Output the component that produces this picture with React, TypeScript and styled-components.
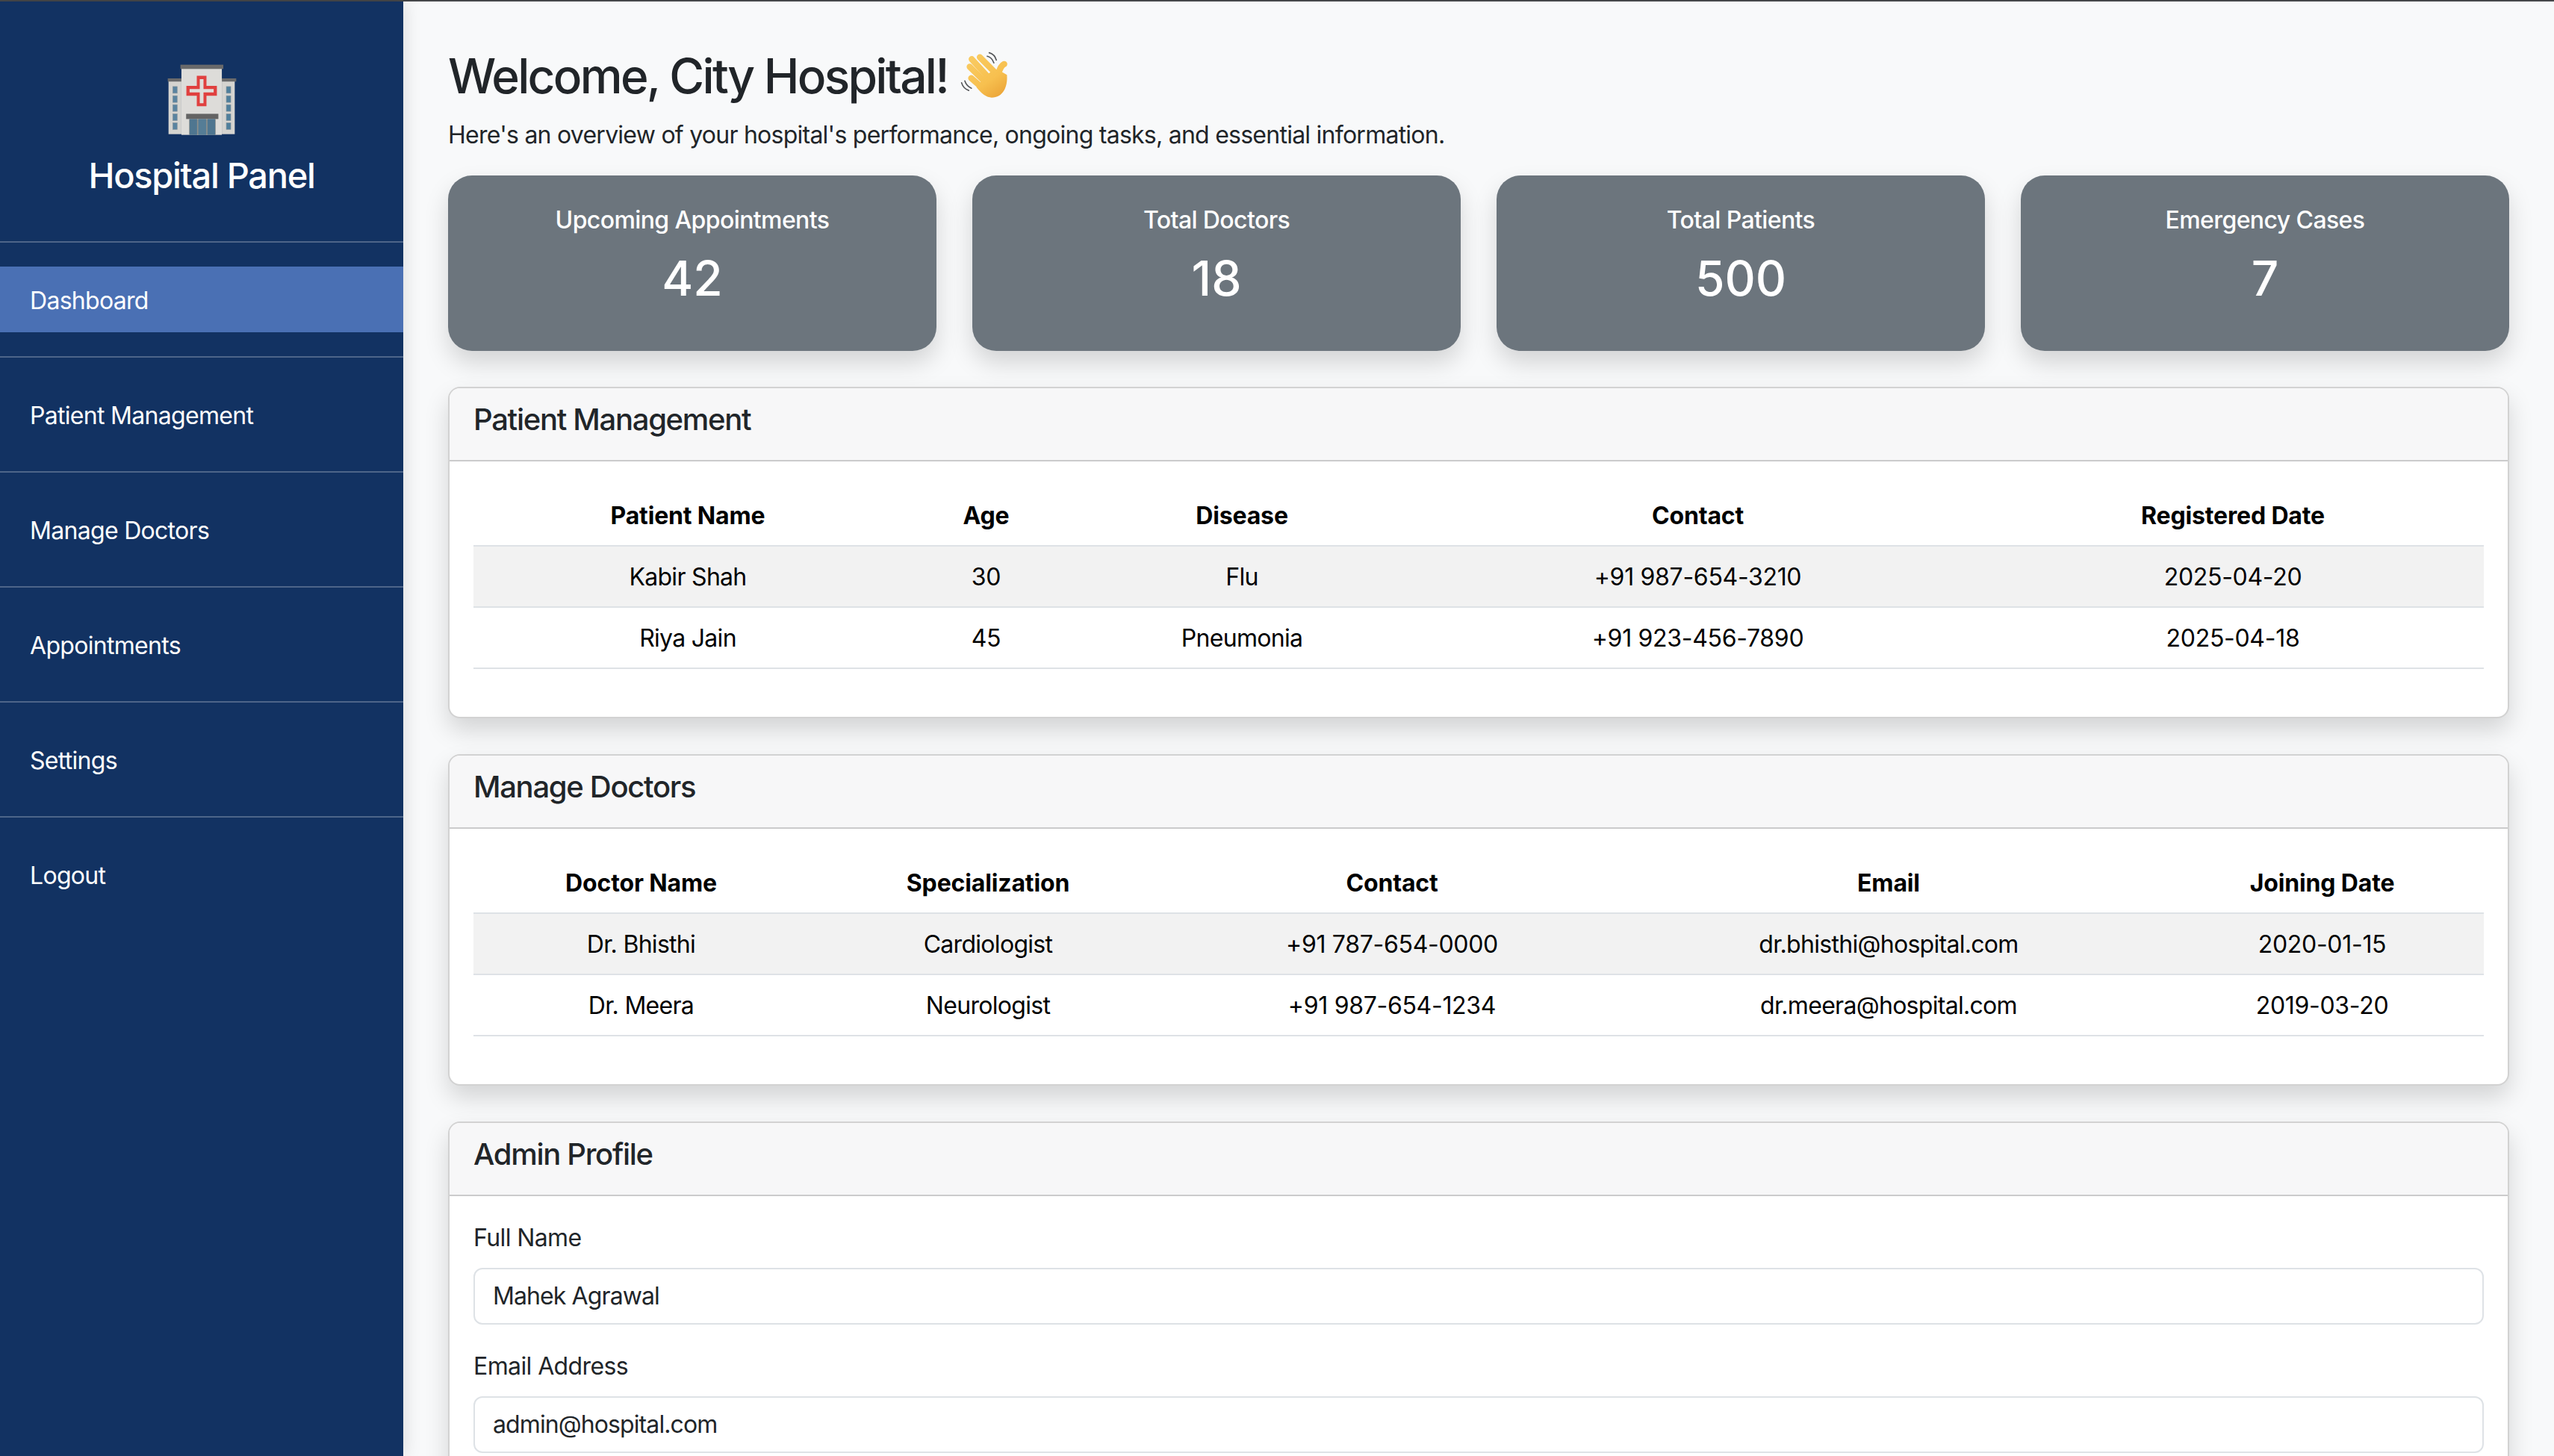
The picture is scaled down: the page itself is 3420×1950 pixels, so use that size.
import * as React from 'react'
import styled, { createGlobalStyle } from 'styled-components'

const GlobalStyle = createGlobalStyle`
  * {
    box-sizing: border-box;
  }

  html, body {
    margin: 0;
    padding: 0;
    background: #f8f9fa;
  }

  body {
    font-family: Inter, "Liberation Sans", sans-serif;
    font-size: 32px;
    line-height: 48px;
    color: #212529;
  }
`

const Page = styled.div`
  height: 100vh;
  display: flex;
  flex-direction: column;
  overflow: hidden;
`

const TopLine = styled.div`
  height: 2px;
  flex-shrink: 0;
  background: #45474a;
`

const Shell = styled.div`
  flex: 1;
  display: flex;
  min-height: 0;
`

const Sidebar = styled.aside`
  width: 540px;
  flex-shrink: 0;
  background: #123262;
  color: #fff;
  box-shadow: 4px 0 20px rgba(0, 0, 0, 0.1);
  position: relative;
`

const Brand = styled.div`
  height: 321px;
  padding-top: 83px;
  display: flex;
  flex-direction: column;
  align-items: center;
`

const BrandTitle = styled.h4`
  margin: 24px 0 0;
  font-size: 47px;
  line-height: 57.6px;
  font-weight: 500;
  letter-spacing: -1.3px;
`

const NavList = styled.ul`
  list-style: none;
  margin: 0;
  padding: 0;
`

const NavItem = styled.li`
  border-top: 2px solid rgba(255, 255, 255, 0.25);
  padding: 32px 0;
`

const NavLink = styled.a<{ $active?: boolean }>`
  display: block;
  height: 88px;
  padding: 22px 40px 18px;
  color: #fff;
  font-size: 32px;
  line-height: 48px;
  letter-spacing: -0.7px;
  background: ${props => (props.$active ? '#4a70b4' : 'transparent')};
`

const Main = styled.main`
  flex: 1;
  min-width: 0;
  padding: 62px 60px 60px;
`

const Heading = styled.h2`
  margin: 0 0 16px;
  font-size: 64px;
  line-height: 76.8px;
  font-weight: 500;
  letter-spacing: -2.7px;
  display: flex;
  align-items: center;
  gap: 16px;
`

const WaveSlot = styled.span`
  display: flex;
  margin-top: -6px;
`

const Intro = styled.p`
  margin: 0 0 30px;
  letter-spacing: -0.75px;
`

const StatRow = styled.div`
  display: grid;
  grid-template-columns: repeat(4, 1fr);
  gap: 48px;
  margin-bottom: 48px;
`

const StatCard = styled.div`
  height: 235px;
  padding-top: 41px;
  background: #6c757d;
  color: #fff;
  border-radius: 32px;
  text-align: center;
  box-shadow: 0 16px 32px rgba(0, 0, 0, 0.15);
`

const StatLabel = styled.h6`
  margin: 0 0 21px;
  font-size: 32px;
  line-height: 38.4px;
  font-weight: 500;
  letter-spacing: -0.6px;
`

const StatValue = styled.div`
  font-size: 64px;
  line-height: 76.8px;
  font-weight: 500;
`

const Panel = styled.section`
  background: #fff;
  border: 2px solid rgba(0, 0, 0, 0.175);
  border-radius: 16px;
  margin-bottom: 48px;
  box-shadow: 0 16px 32px rgba(0, 0, 0, 0.15);
`

const PanelHeader = styled.div`
  height: 98px;
  padding: 18px 32px 0;
  background: #f7f7f8;
  border-bottom: 2px solid rgba(0, 0, 0, 0.175);
  border-radius: 14px 14px 0 0;
`

const PanelTitle = styled.h5`
  margin: 0;
  font-size: 40px;
  line-height: 48px;
  font-weight: 500;
  letter-spacing: -1.3px;
`

const PanelBody = styled.div`
  padding: 32px;
`

const Table = styled.table`
  width: 100%;
  table-layout: fixed;
  border-collapse: collapse;
  margin-bottom: 32px;
  color: #000;
  text-align: center;
`

const Column = styled.col<{ $width: number }>`
  width: ${props => props.$width}px;
`

const HeadCell = styled.th`
  padding: 17px 8px 15px;
  font-weight: 700;
  letter-spacing: -0.15px;
  border-bottom: 2px solid #dee2e6;
`

const Row = styled.tr<{ $striped?: boolean }>`
  background: ${props => (props.$striped ? '#f2f2f2' : 'transparent')};
`

const Cell = styled.td<{ $numeric?: boolean }>`
  padding: 17px 8px 15px;
  letter-spacing: ${props => (props.$numeric ? '-0.3px' : '-0.7px')};
  border-bottom: 2px solid #dee2e6;
`

const Field = styled.div`
  margin-bottom: 32px;
`

const FieldLabel = styled.label`
  display: block;
  margin-bottom: 16px;
  letter-spacing: -0.6px;
`

const Input = styled.input`
  display: block;
  width: 100%;
  height: 76px;
  padding: 12px 24px;
  border: 2px solid #dee2e6;
  border-radius: 12px;
  background: #fff;
  color: #212529;
  font: inherit;
  letter-spacing: -0.9px;
`

const HospitalIcon = () => (
  <svg width="93" height="97" viewBox="130 40 280 292">
    <rect x="135" y="105" width="52" height="220" fill="#d5d4d0" />
    <rect x="350" y="105" width="52" height="220" fill="#d5d4d0" />
    <rect x="132" y="100" width="55" height="13" fill="#69696a" />
    <rect x="350" y="100" width="58" height="13" fill="#69696a" />
    <rect x="187" y="60" width="163" height="268" fill="#dddcd9" />
    <rect x="183" y="45" width="173" height="17" fill="#69696a" />
    {[133, 170, 206, 243, 279].map(y => (
      <React.Fragment key={y}>
        <rect x="152" y={y} width="18" height="27" fill="#5a84a0" stroke="#8a979e" strokeWidth="2" />
        <rect x="368" y={y} width="18" height="27" fill="#4f7f9c" stroke="#8a979e" strokeWidth="2" />
      </React.Fragment>
    ))}
    <path d="M249 90h39v40h42v40h-42v42h-39v-42h-42v-40h42z" fill="#e0403f" />
    <path d="M261 103h15v40h41v14h-41v43h-15v-43h-41v-14h41z" fill="#dfdedb" />
    <rect x="206" y="243" width="130" height="21" fill="#636363" />
    <rect x="218" y="264" width="107" height="64" fill="#8d8f8c" />
    <rect x="220" y="264" width="30" height="64" fill="#4f7690" />
    <rect x="255" y="264" width="32" height="64" fill="#557d96" />
    <rect x="292" y="264" width="31" height="64" fill="#4f7690" />
  </svg>
)

// drawn on the 3x crop grid of the emoji
const WaveIcon = () => (
  <svg width="66" height="65" viewBox="40 50 200 195">
    <defs>
      <linearGradient id="hand" gradientUnits="userSpaceOnUse" x1="90" y1="70" x2="210" y2="240">
        <stop offset="0" stopColor="#f9cb62" />
        <stop offset="0.6" stopColor="#f7c04f" />
        <stop offset="1" stopColor="#eba437" />
      </linearGradient>
    </defs>
    <g fill="none" stroke="#55575a" strokeWidth="5" strokeLinecap="round">
      <path d="M152 74c12 3 22 13 27 27" />
      <path d="M160 60c14 4 25 15 29 30" />
      <path d="M48 182c4 14 15 26 29 31" />
      <path d="M61 174c4 13 14 24 27 30" />
    </g>
    <g fill="none" stroke="url(#hand)" strokeWidth="25" strokeLinecap="round">
      <path d="M122 78L185 142" />
      <path d="M89 86L152 155" />
      <path d="M81 117L140 175" />
      <path d="M87 163L135 205" />
      <path d="M221 106C208 112 204 125 198 142" />
    </g>
    <path
      d="M178 128L198 130L232 150C236 200 216 242 170 242C150 242 128 226 108 200L125 180L145 155Z"
      fill="url(#hand)"
    />
  </svg>
)

const stats = [
  { label: 'Upcoming Appointments', value: '42' },
  { label: 'Total Doctors', value: '18' },
  { label: 'Total Patients', value: '500' },
  { label: 'Emergency Cases', value: '7' }
]

const navLinks = ['Dashboard', 'Patient Management', 'Manage Doctors', 'Appointments', 'Settings', 'Logout']

const patientTable = {
  columns: [574, 225, 460, 761, 672],
  head: ['Patient Name', 'Age', 'Disease', 'Contact', 'Registered Date'],
  rows: [
    ['Kabir Shah', '30', 'Flu', '+91 987-654-3210', '2025-04-20'],
    ['Riya Jain', '45', 'Pneumonia', '+91 923-456-7890', '2025-04-18']
  ]
}

const doctorTable = {
  columns: [449, 480, 602, 728, 433],
  head: ['Doctor Name', 'Specialization', 'Contact', 'Email', 'Joining Date'],
  rows: [
    ['Dr. Bhisthi', 'Cardiologist', '+91 787-654-0000', 'dr.bhisthi@hospital.com', '2020-01-15'],
    ['Dr. Meera', 'Neurologist', '+91 987-654-1234', 'dr.meera@hospital.com', '2019-03-20']
  ]
}

const DataTable = ({ data }: { data: typeof patientTable }) => (
  <Table>
    <colgroup>
      {data.columns.map((width, i) => <Column key={i} $width={width} />)}
    </colgroup>
    <thead>
      <tr>
        {data.head.map(title => <HeadCell key={title}>{title}</HeadCell>)}
      </tr>
    </thead>
    <tbody>
      {data.rows.map((row, i) => (
        <Row key={row[0]} $striped={i === 0}>
          {row.map(text => <Cell key={text} $numeric={/^[+\d]/.test(text)}>{text}</Cell>)}
        </Row>
      ))}
    </tbody>
  </Table>
)

export default function App() {
  return (
    <Page>
      <GlobalStyle />
      <TopLine />
      <Shell>
        <Sidebar>
          <Brand>
            <HospitalIcon />
            <BrandTitle>Hospital Panel</BrandTitle>
          </Brand>
          <NavList>
            {navLinks.map((link, i) => (
              <NavItem key={link}>
                <NavLink $active={i === 0}>{link}</NavLink>
              </NavItem>
            ))}
          </NavList>
        </Sidebar>
        <Main>
          <Heading>Welcome, City Hospital! <WaveSlot><WaveIcon /></WaveSlot></Heading>
          <Intro>Here's an overview of your hospital's performance, ongoing tasks, and essential information.</Intro>
          <StatRow>
            {stats.map(stat => (
              <StatCard key={stat.label}>
                <StatLabel>{stat.label}</StatLabel>
                <StatValue>{stat.value}</StatValue>
              </StatCard>
            ))}
          </StatRow>
          <Panel>
            <PanelHeader><PanelTitle>Patient Management</PanelTitle></PanelHeader>
            <PanelBody><DataTable data={patientTable} /></PanelBody>
          </Panel>
          <Panel>
            <PanelHeader><PanelTitle>Manage Doctors</PanelTitle></PanelHeader>
            <PanelBody><DataTable data={doctorTable} /></PanelBody>
          </Panel>
          <Panel>
            <PanelHeader><PanelTitle>Admin Profile</PanelTitle></PanelHeader>
            <PanelBody>
              <Field>
                <FieldLabel>Full Name</FieldLabel>
                <Input defaultValue="Mahek Agrawal" />
              </Field>
              <Field>
                <FieldLabel>Email Address</FieldLabel>
                <Input defaultValue="admin@hospital.com" />
              </Field>
            </PanelBody>
          </Panel>
        </Main>
      </Shell>
    </Page>
  )
}
